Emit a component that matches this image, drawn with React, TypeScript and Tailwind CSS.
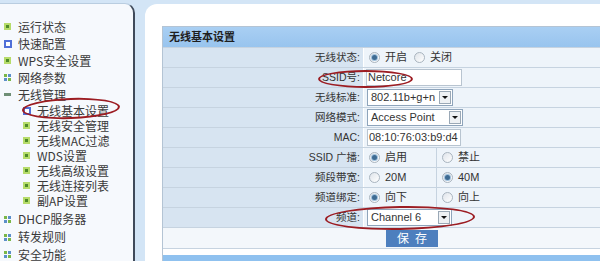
import React from "react";

type IconKind = "green" | "blue" | "grid" | "bar" | "subBlue" | "subGreen";

const menu: { text: string; icon: IconKind; sub?: boolean; h: string }[] = [
  { text: "运行状态", icon: "green", h: "h-[17px]" },
  { text: "快速配置", icon: "blue", h: "h-[17px]" },
  { text: "WPS安全设置", icon: "green", h: "h-[17px]" },
  { text: "网络参数", icon: "grid", h: "h-[17px]" },
  { text: "无线管理", icon: "bar", h: "h-[17px]" },
  { text: "无线基本设置", icon: "subBlue", sub: true, h: "h-[15px]" },
  { text: "无线安全管理", icon: "subGreen", sub: true, h: "h-[15px]" },
  { text: "无线MAC过滤", icon: "subGreen", sub: true, h: "h-[15px]" },
  { text: "WDS设置", icon: "subGreen", sub: true, h: "h-[15px]" },
  { text: "无线高级设置", icon: "subGreen", sub: true, h: "h-[15px]" },
  { text: "无线连接列表", icon: "subGreen", sub: true, h: "h-[15px]" },
  { text: "副AP设置", icon: "subGreen", sub: true, h: "h-[15px]" },
  { text: "DHCP服务器", icon: "grid", h: "h-[18px]" },
  { text: "转发规则", icon: "grid", h: "h-[18px]" },
  { text: "安全功能", icon: "grid", h: "h-[17px]" },
];

function MenuIcon({ kind }: { kind: IconKind }) {
  if (kind === "blue" || kind === "subBlue")
    return (
      <span className="w-[8px] h-[8px] border-2 border-[#4f6fd8] bg-white" />
    );
  if (kind === "grid")
    return (
      <span className="grid grid-cols-2 gap-[1px]">
        <span className="w-[3px] h-[3px] bg-[#7ab648]" />
        <span className="w-[3px] h-[3px] bg-[#5b8fc9]" />
        <span className="w-[3px] h-[3px] bg-[#5b8fc9]" />
        <span className="w-[3px] h-[3px] bg-[#7ab648]" />
      </span>
    );
  if (kind === "bar")
    return <span className="w-[7px] h-[3px] bg-[#6f8f76]" />;
  return (
    <span className="w-[7px] h-[7px] bg-[#b6dc6a] flex items-center justify-center">
      <span className="w-[3px] h-[3px] bg-[#4f8a2a]" />
    </span>
  );
}

function Radio({ checked }: { checked?: boolean }) {
  return (
    <span className="w-[11px] h-[11px] rounded-full border border-[#a9b4bf] bg-gradient-to-br from-[#dfe4ea] to-white flex items-center justify-center shrink-0">
      {checked && (
        <span className="w-[5px] h-[5px] rounded-full bg-[#3e6b93] ring-1 ring-[#9fc0dc]" />
      )}
    </span>
  );
}

function Select({ value, cls }: { value: string; cls: string }) {
  return (
    <div
      className={`h-[17px] border border-[#8ea4bb] bg-white flex items-center justify-between ${cls}`}
    >
      <span className="pl-[3px]">{value}</span>
      <span className="w-[12px] h-[13px] mr-[1px] border border-[#9aa8b6] bg-[#eef1f4] flex items-center justify-center">
        <span className="w-0 h-0 border-l-[3px] border-r-[3px] border-t-[3px] border-l-transparent border-r-transparent border-t-[#111]" />
      </span>
    </div>
  );
}

function Row({
  label,
  children,
}: {
  label: string;
  children: React.ReactNode;
}) {
  return (
    <div className="flex h-[20px] border-b border-[#c6d3e0]">
      <div className="w-[200px] bg-[#d7e4f1] flex items-center justify-end pr-[3px] text-[#333] text-[10.5px]">
        {label}
      </div>
      <div className="flex-1 bg-[#eef4fa] border-l border-white flex items-center pl-[2px]">
        {children}
      </div>
    </div>
  );
}

function RadioPair({
  a,
  b,
  first,
}: {
  a: string;
  b: string;
  first: boolean;
}) {
  return (
    <div className="flex h-full items-center">
      <div className="w-[71px] h-full flex items-center gap-[5px] pl-[3px] border-r border-[#c6d3e0]">
        <Radio checked={first} />
        <span>{a}</span>
      </div>
      <div className="flex items-center gap-[5px] pl-[5px]">
        <Radio checked={!first} />
        <span>{b}</span>
      </div>
    </div>
  );
}

export default function App() {
  return (
    <div className="relative w-[600px] h-[261px] overflow-hidden bg-[#d3e5f6] flex font-['Liberation_Sans','Noto_Sans_CJK_SC',sans-serif]">
      {/* sidebar */}
      <div className="w-[135px] mt-[3px] bg-[#f6f9fd] border-r-2 border-t border-[#3f4a5a] border-t-[#b9cde0] rounded-tr-[10px] pt-[14px] text-[12px] text-[#3a3a3a] font-['Noto_Sans_CJK_SC',sans-serif]">
        {menu.map((m, i) => (
          <div
            key={i}
            className={`flex items-center ${m.h} ${m.sub ? "pl-[22px]" : "pl-[3px]"} ${i === 12 ? "mt-[2px]" : ""}`}
          >
            <span className="w-[9px] flex justify-center">
              <MenuIcon kind={m.icon} />
            </span>
            <span className="ml-[6px] leading-[12px] whitespace-nowrap">
              {m.text}
            </span>
          </div>
        ))}
      </div>

      {/* main */}
      <div className="flex-1 ml-[10px] mt-[4px] bg-white rounded-tl-[12px] pl-[17px] pt-[22px]">
        <div className="border-l border-t border-[#b4c4d4] text-[11px] text-[#333]">
          <div className="h-[21px] bg-gradient-to-b from-[#a9cff3] to-[#98c4ee] flex items-center pl-[6px] font-bold text-[#1e1e1e] border-b border-[#c6d3e0]">
            无线基本设置
          </div>
          <Row label="无线状态:">
            <div className="flex items-center gap-[5px] pl-[3px]">
              <Radio checked />
              <span className="mr-[2px]">开启</span>
              <Radio />
              <span>关闭</span>
            </div>
          </Row>
          <Row label="SSID号:">
            <div className="w-[96px] h-[17px] border border-[#b8c4d0] bg-white flex items-center pl-[1px]">
              Netcore
            </div>
          </Row>
          <Row label="无线标准:">
            <Select value="802.11b+g+n" cls="w-[86px] ml-[1px]" />
          </Row>
          <Row label="网络模式:">
            <Select value="Access Point" cls="w-[96px] ml-[1px]" />
          </Row>
          <Row label="MAC:">
            <div className="w-[94px] h-[17px] border border-[#b8c4d0] bg-white flex items-center pl-[1px] ml-[1px]">
              08:10:76:03:b9:d4
            </div>
          </Row>
          <Row label="SSID 广播:">
            <RadioPair a="启用" b="禁止" first />
          </Row>
          <Row label="频段带宽:">
            <RadioPair a="20M" b="40M" first={false} />
          </Row>
          <Row label="频道绑定:">
            <RadioPair a="向下" b="向上" first />
          </Row>
          <Row label="频道:">
            <Select value="Channel 6" cls="w-[85px] ml-[1px]" />
          </Row>
          <div className="h-[21px] bg-[#f3f7fb] border-b border-[#c6d3e0] flex items-center pl-[223px]">
            <button className="w-[52px] h-[17px] bg-[#4d7fbe] text-white text-[12px] tracking-[6px] pl-[6px] font-['Noto_Sans_CJK_SC',sans-serif] leading-none">
              保存
            </button>
          </div>
          <div className="h-[6px] bg-white" />
          <div className="h-[10px] bg-[#8fc1ef]" />
        </div>
      </div>

      {/* annotation ellipses */}
      <div className="absolute left-[22px] top-[98px] w-[98px] h-[21px] rounded-[50%] border-[2.5px] border-[#9c1c22] -rotate-2 pointer-events-none" />
      <div className="absolute left-[318px] top-[70px] w-[95px] h-[18px] rounded-[50%] border-[2.5px] border-[#9c1c22] pointer-events-none" />
      <div className="absolute left-[325px] top-[206px] w-[150px] h-[24px] rounded-[50%] border-[2.5px] border-[#9c1c22] -rotate-1 pointer-events-none" />
    </div>
  );
}
